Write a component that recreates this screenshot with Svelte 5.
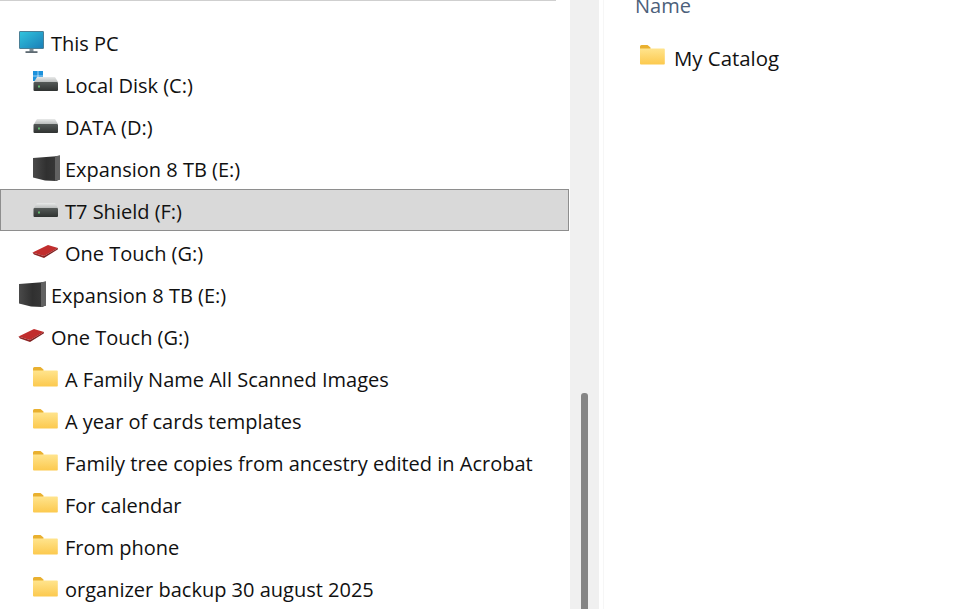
<script>
  const drives = [
    { label: 'This PC', icon: 'pc', indent: 0 },
    { label: 'Local Disk (C:)', icon: 'sys', indent: 1 },
    { label: 'DATA (D:)', icon: 'disk', indent: 1 },
    { label: 'Expansion 8 TB (E:)', icon: 'exp', indent: 1 },
    { label: 'T7 Shield (F:)', icon: 'disk', indent: 1, selected: true },
    { label: 'One Touch (G:)', icon: 'touch', indent: 1 },
    { label: 'Expansion 8 TB (E:)', icon: 'exp', indent: 0 },
    { label: 'One Touch (G:)', icon: 'touch', indent: 0 },
    { label: 'A Family Name All Scanned Images', icon: 'folder', indent: 1 },
    { label: 'A year of cards templates', icon: 'folder', indent: 1 },
    { label: 'Family tree copies from ancestry edited in Acrobat', icon: 'folder', indent: 1 },
    { label: 'For calendar', icon: 'folder', indent: 1 },
    { label: 'From phone', icon: 'folder', indent: 1 },
    { label: 'organizer backup 30 august 2025', icon: 'folder', indent: 1 }
  ];
</script>

{#snippet icon(kind)}
  <svg class="icon" viewBox="0 0 28 28" width="28" height="28" aria-hidden="true">
    {#if kind === 'folder'}
      <path d="M1 7.5a1.5 1.5 0 0 1 1.5-1.5h6l3 2.6v2.9H1z" fill="#e9b02f" />
      <path d="M1 9.5h24a.8.8 0 0 1 .8.8v14.4a.8.8 0 0 1-.8.8H2a1 1 0 0 1-1-1z" fill="url(#fold)" />
    {:else if kind === 'pc'}
      <rect x="1" y="6" width="25" height="18" rx="1.2" fill="#4b7f95" />
      <rect x="2" y="7" width="23" height="16" fill="url(#screen)" />
      <rect x="11.5" y="24" width="4" height="3" fill="#7d8b93" />
      <rect x="7.5" y="26.2" width="12" height="1.8" fill="#5e6a72" />
    {:else if kind === 'exp'}
      <path d="M1 7 24 5.2 28 4.5V28.5L24 30 13 29.5 1 26.5z" fill="url(#expf)" />
      <path d="M23 5.3 28 4.5V28.5L23 30z" fill="#626262" />
    {:else if kind === 'touch'}
      <path d="M0.5 17.5 16 10l10 3-14 8z" fill="#c12d2d" />
      <path d="M0.5 17.5 12 21v2L2 19.5z" fill="#8f2525" />
      <path d="M12 21l14-8v1.2L12 23z" fill="#7f1f1f" />
    {:else}
      {#if kind === 'sys'}
        <g fill="#1d92dc">
          <rect x="1" y="4" width="4.7" height="4.7" />
          <rect x="6.3" y="4" width="4.7" height="4.7" />
          <rect x="1" y="9.3" width="4.7" height="4.7" />
          <rect x="6.3" y="9.3" width="4.7" height="4.7" />
        </g>
      {/if}
      <path d="M2 15 5 10h18l3 5z" fill="url(#disktop)" />
      <rect x="1.5" y="15" width="24.5" height="9" rx="1" fill="url(#diskbody)" />
      <rect x="6" y="18.5" width="2" height="2" fill="#63b96f" />
    {/if}
  </svg>
{/snippet}

<svg class="defs" width="0" height="0" aria-hidden="true">
  <defs>
    <linearGradient id="fold" x1="0" y1="0" x2="0" y2="1">
      <stop offset="0" stop-color="#ffe48d" />
      <stop offset="1" stop-color="#fcc94e" />
    </linearGradient>
    <linearGradient id="screen" x1="0" y1="0" x2="1" y2="1">
      <stop offset="0" stop-color="#2fc3dd" />
      <stop offset="1" stop-color="#1b7fb8" />
    </linearGradient>
    <linearGradient id="expf" x1="0" y1="0" x2="1" y2="0">
      <stop offset="0" stop-color="#4a4a4a" />
      <stop offset="0.5" stop-color="#303030" />
      <stop offset="1" stop-color="#3a3a3a" />
    </linearGradient>
    <linearGradient id="disktop" x1="0" y1="0" x2="0" y2="1">
      <stop offset="0" stop-color="#e9eaea" />
      <stop offset="1" stop-color="#b9bcbb" />
    </linearGradient>
    <linearGradient id="diskbody" x1="0" y1="0" x2="0" y2="1">
      <stop offset="0" stop-color="#555a58" />
      <stop offset="1" stop-color="#2f3231" />
    </linearGradient>
  </defs>
</svg>

<div class="window">
  <nav class="nav">
    <div class="topline"></div>
    <ul class="tree">
      {#each drives as d}
        <li class="row" class:sub={d.indent === 1} class:selected={d.selected}>
          {@render icon(d.icon)}
          <span class="label">{d.label}</span>
        </li>
      {/each}
    </ul>
  </nav>
  <div class="scrolltrack"><div class="thumb"></div></div>
  <main class="main">
    <div class="colhead">Name</div>
    <div class="file">
      {@render icon('folder')}
      <span class="catalog">My Catalog</span>
    </div>
  </main>
</div>

<style>
  :global(body) {
    margin: 0;
    background: #fff;
  }
  .defs {
    position: absolute;
  }
  .window {
    display: flex;
    width: 960px;
    height: 609px;
    overflow: hidden;
    font-family: "Open Sans", "Noto Sans", sans-serif;
    font-size: 20px;
    color: #111;
    background: #fff;
  }
  .nav {
    width: 570px;
    flex: none;
  }
  .topline {
    width: 556px;
    height: 1px;
    background: #cfcfcf;
    margin-bottom: 20px;
  }
  .tree {
    list-style: none;
    margin: 0;
    padding: 0;
  }
  .row {
    box-sizing: border-box;
    display: flex;
    align-items: center;
    gap: 5px;
    width: 569px;
    height: 42px;
    padding-left: 18px;
    white-space: nowrap;
  }
  .label {
    padding-top: 2px;
  }
  .row.sub {
    padding-left: 32px;
  }
  .row.selected {
    background: #d9d9d9;
    border: 1px solid #8e8e8e;
    padding-left: 31px;
  }
  .icon {
    flex: none;
    margin-top: -6px;
    overflow: visible;
  }
  .scrolltrack {
    width: 29px;
    flex: none;
    background: #f0f0f0;
    padding: 393px 0 0 11px;
    box-sizing: border-box;
  }
  .thumb {
    width: 7px;
    height: 216px;
    background: #858585;
    border-radius: 3px 3px 0 0;
  }
  .main {
    flex: 1;
    margin-left: 4px;
    border-left: 1px solid #f6f6f6;
    padding-left: 31px;
  }
  .colhead {
    color: #4c607a;
    margin-top: -7px;
    line-height: 26px;
  }
  .file {
    display: flex;
    align-items: center;
    gap: 7px;
    margin-top: 18px;
    padding-left: 4px;
    height: 42px;
    white-space: nowrap;
  }
  .file .icon {
    margin-top: -11px;
  }
  .catalog {
    font-size: 20.4px;
  }
</style>
